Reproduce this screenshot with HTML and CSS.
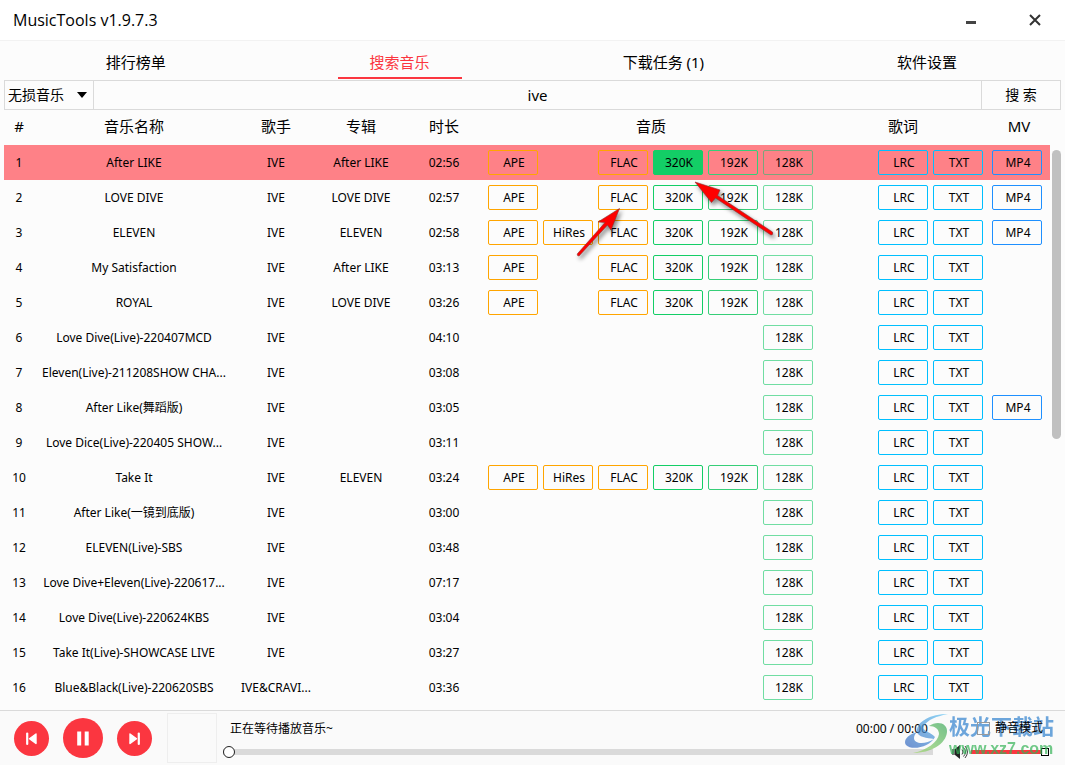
FILE: index.html
```html
<!DOCTYPE html>
<html lang="zh-CN">
<head>
<meta charset="utf-8">
<meta name="viewport" content="width=device-width, initial-scale=1">
<title>MusicTools v1.9.7.3</title>
<link rel="stylesheet" href="styles.css">
</head>
<body>
<header class="titlebar">
  <h1 class="app-title">MusicTools v1.9.7.3</h1>
  <div class="window-actions">
    <button class="window-btn" type="button" aria-label="最小化"><svg width="14" height="14" viewBox="0 0 14 14"><path d="M2 9.500h10" stroke="#444" stroke-width="3"/></svg></button>
    <button class="window-btn" type="button" aria-label="关闭"><svg width="14" height="14" viewBox="0 0 14 14"><path d="M2 2l10 10M12 2L2 12" stroke="#333" stroke-width="2"/></svg></button>
  </div>
</header>

<nav class="tabs">
  <a class="tab" href="#rank">排行榜单</a>
  <a class="tab active" href="#search" aria-current="page">搜索音乐</a>
  <a class="tab" href="#tasks">下载任务 (1)</a>
  <a class="tab" href="#settings">软件设置</a>
</nav>

<form class="search">
  <select class="source" aria-label="音乐来源"><option>无损音乐</option></select>
  <input class="keyword" type="text" value="ive" aria-label="关键词">
  <button class="submit" type="button">搜 索</button>
</form>

<main class="results">
  <table class="songs">
    <colgroup><col class="c-no"><col class="c-name"><col class="c-artist"><col class="c-album"><col class="c-time"><col class="c-quality"><col class="c-lyrics"><col class="c-mv"></colgroup>
    <thead>
      <tr><th>#</th><th>音乐名称</th><th>歌手</th><th>专辑</th><th>时长</th><th>音质</th><th>歌词</th><th>MV</th></tr>
    </thead>
    <tbody>
      <tr class="selected"><td>1</td><td>After LIKE</td><td>IVE</td><td>After LIKE</td><td>02:56</td>
        <td><div class="quality"><button class="tag ape">APE</button><button class="tag flac">FLAC</button><button class="tag k320 on">320K</button><button class="tag k192">192K</button><button class="tag k128">128K</button></div></td>
        <td><div class="lyrics"><button class="tag">LRC</button><button class="tag">TXT</button></div></td><td><div class="mv"><button class="tag mp4">MP4</button></div></td></tr>
      <tr><td>2</td><td>LOVE DIVE</td><td>IVE</td><td>LOVE DIVE</td><td>02:57</td>
        <td><div class="quality"><button class="tag ape">APE</button><button class="tag flac">FLAC</button><button class="tag k320">320K</button><button class="tag k192">192K</button><button class="tag k128">128K</button></div></td>
        <td><div class="lyrics"><button class="tag">LRC</button><button class="tag">TXT</button></div></td><td><div class="mv"><button class="tag mp4">MP4</button></div></td></tr>
      <tr><td>3</td><td>ELEVEN</td><td>IVE</td><td>ELEVEN</td><td>02:58</td>
        <td><div class="quality"><button class="tag ape">APE</button><button class="tag hires">HiRes</button><button class="tag flac">FLAC</button><button class="tag k320">320K</button><button class="tag k192">192K</button><button class="tag k128">128K</button></div></td>
        <td><div class="lyrics"><button class="tag">LRC</button><button class="tag">TXT</button></div></td><td><div class="mv"><button class="tag mp4">MP4</button></div></td></tr>
      <tr><td>4</td><td>My Satisfaction</td><td>IVE</td><td>After LIKE</td><td>03:13</td>
        <td><div class="quality"><button class="tag ape">APE</button><button class="tag flac">FLAC</button><button class="tag k320">320K</button><button class="tag k192">192K</button><button class="tag k128">128K</button></div></td>
        <td><div class="lyrics"><button class="tag">LRC</button><button class="tag">TXT</button></div></td><td></td></tr>
      <tr><td>5</td><td>ROYAL</td><td>IVE</td><td>LOVE DIVE</td><td>03:26</td>
        <td><div class="quality"><button class="tag ape">APE</button><button class="tag flac">FLAC</button><button class="tag k320">320K</button><button class="tag k192">192K</button><button class="tag k128">128K</button></div></td>
        <td><div class="lyrics"><button class="tag">LRC</button><button class="tag">TXT</button></div></td><td></td></tr>
      <tr><td>6</td><td>Love Dive(Live)-220407MCD</td><td>IVE</td><td></td><td>04:10</td>
        <td><div class="quality"><button class="tag k128">128K</button></div></td>
        <td><div class="lyrics"><button class="tag">LRC</button><button class="tag">TXT</button></div></td><td></td></tr>
      <tr><td>7</td><td>Eleven(Live)-211208SHOW CHA...</td><td>IVE</td><td></td><td>03:08</td>
        <td><div class="quality"><button class="tag k128">128K</button></div></td>
        <td><div class="lyrics"><button class="tag">LRC</button><button class="tag">TXT</button></div></td><td></td></tr>
      <tr><td>8</td><td>After Like(舞蹈版)</td><td>IVE</td><td></td><td>03:05</td>
        <td><div class="quality"><button class="tag k128">128K</button></div></td>
        <td><div class="lyrics"><button class="tag">LRC</button><button class="tag">TXT</button></div></td><td><div class="mv"><button class="tag mp4">MP4</button></div></td></tr>
      <tr><td>9</td><td>Love Dice(Live)-220405 SHOW...</td><td>IVE</td><td></td><td>03:11</td>
        <td><div class="quality"><button class="tag k128">128K</button></div></td>
        <td><div class="lyrics"><button class="tag">LRC</button><button class="tag">TXT</button></div></td><td></td></tr>
      <tr><td>10</td><td>Take It</td><td>IVE</td><td>ELEVEN</td><td>03:24</td>
        <td><div class="quality"><button class="tag ape">APE</button><button class="tag hires">HiRes</button><button class="tag flac">FLAC</button><button class="tag k320">320K</button><button class="tag k192">192K</button><button class="tag k128">128K</button></div></td>
        <td><div class="lyrics"><button class="tag">LRC</button><button class="tag">TXT</button></div></td><td></td></tr>
      <tr><td>11</td><td>After Like(一镜到底版)</td><td>IVE</td><td></td><td>03:00</td>
        <td><div class="quality"><button class="tag k128">128K</button></div></td>
        <td><div class="lyrics"><button class="tag">LRC</button><button class="tag">TXT</button></div></td><td></td></tr>
      <tr><td>12</td><td>ELEVEN(Live)-SBS</td><td>IVE</td><td></td><td>03:48</td>
        <td><div class="quality"><button class="tag k128">128K</button></div></td>
        <td><div class="lyrics"><button class="tag">LRC</button><button class="tag">TXT</button></div></td><td></td></tr>
      <tr><td>13</td><td>Love Dive+Eleven(Live)-220617...</td><td>IVE</td><td></td><td>07:17</td>
        <td><div class="quality"><button class="tag k128">128K</button></div></td>
        <td><div class="lyrics"><button class="tag">LRC</button><button class="tag">TXT</button></div></td><td></td></tr>
      <tr><td>14</td><td>Love Dive(Live)-220624KBS</td><td>IVE</td><td></td><td>03:04</td>
        <td><div class="quality"><button class="tag k128">128K</button></div></td>
        <td><div class="lyrics"><button class="tag">LRC</button><button class="tag">TXT</button></div></td><td></td></tr>
      <tr><td>15</td><td>Take It(Live)-SHOWCASE LIVE</td><td>IVE</td><td></td><td>03:27</td>
        <td><div class="quality"><button class="tag k128">128K</button></div></td>
        <td><div class="lyrics"><button class="tag">LRC</button><button class="tag">TXT</button></div></td><td></td></tr>
      <tr><td>16</td><td>Blue&amp;Black(Live)-220620SBS</td><td>IVE&amp;CRAVI...</td><td></td><td>03:36</td>
        <td><div class="quality"><button class="tag k128">128K</button></div></td>
        <td><div class="lyrics"><button class="tag">LRC</button><button class="tag">TXT</button></div></td><td></td></tr>
    </tbody>
  </table>
  <div class="scrollbar"><div class="thumb"></div></div>
  <svg class="arrows" width="220" height="100" viewBox="0 0 220 100" aria-hidden="true">
    <g fill="#fe0000" stroke="#8a3030" stroke-width="0.6" stroke-linejoin="round">
      <path d="M49.500 38.500L41 60L37.500 55L9 86Q7 86 7.200 84L35 52.500L28 52Z"/>
      <path d="M125 12L150 20L147.500 25.500L202.500 62Q203.500 65 201 65L145.500 28L141.500 32.500Z"/>
    </g>
  </svg>
</main>

<footer class="player">
  <div class="controls">
    <button class="round" type="button" aria-label="上一首"><svg width="35" height="35" viewBox="0 0 35 35"><path d="M13.2 12.500v10.500" stroke="#fff" stroke-width="2.2" stroke-linecap="round"/><path d="M22 13v9.500L15.500 17.700z" fill="#fff" stroke="#fff" stroke-width="1.4" stroke-linejoin="round"/></svg></button>
    <button class="round big" type="button" aria-label="暂停"><svg width="40" height="40" viewBox="0 0 40 40"><path d="M16.2 13.500v14M23.700 13.500v14" stroke="#fff" stroke-width="4"/></svg></button>
    <button class="round" type="button" aria-label="下一首"><svg width="35" height="35" viewBox="0 0 35 35"><path d="M21.800 12.500v10.500" stroke="#fff" stroke-width="2.2" stroke-linecap="round"/><path d="M13 13v9.500L19.500 17.700z" fill="#fff" stroke="#fff" stroke-width="1.4" stroke-linejoin="round"/></svg></button>
  </div>
  <div class="cover"></div>
  <div class="now">
    <div class="now-line"><span>正在等待播放音乐~</span><span class="clock">00:00 / 00:00</span></div>
    <input class="seek" type="range" min="0" max="100" value="0" aria-label="播放进度">
  </div>
  <div class="sound">
    <label class="mute"><input class="mute-box" type="checkbox">静音模式</label>
    <div class="volume">
      <svg width="17" height="14" viewBox="0 0 17 14"><path d="M1 4h3v6H1z" fill="#777"/><path d="M4 4l5-4v14l-5-4z" fill="#222"/><path d="M11 4.500q2 2.500 0 5M12.500 2.500q4 4.500 0 9M14 1q5 6 0 12" fill="none" stroke="#444"/></svg>
      <input class="level" type="range" min="0" max="100" value="100" aria-label="音量">
    </div>
  </div>
  <div class="watermark" aria-hidden="true">
    <svg width="44" height="40" viewBox="0 0 44 40">
      <defs>
        <linearGradient id="wmBlue" x1="0" y1="1" x2="1" y2="0"><stop offset="0" stop-color="#3465be"/><stop offset="1" stop-color="#62c6f4"/></linearGradient>
        <linearGradient id="wmGreen" x1="0" y1="1" x2="1" y2="0"><stop offset="0" stop-color="#a4d96c"/><stop offset="1" stop-color="#3ba85c"/></linearGradient>
      </defs>
      <path d="M43 0C25 0 11 8 12 18c1 5 10 6 17 7-9 6-20 5-20-1 0-2 1-4 3-6C2 21-2 27 1 31c6 6 24 2 29-8C26 18 16 17 19 12 22 6 32 2 43 0Z" fill="url(#wmBlue)"/>
      <path d="M24 12c8-6 19-3 18 6-1 12-16 21-34 21 14-3 25-11 26-19 0-5-4-8-10-8Z" fill="url(#wmGreen)"/>
    </svg>
    <div class="wm-text"><span class="wm-name">极光下载站</span><span class="wm-url">www.xz7.com</span></div>
  </div>
</footer>
</body>
</html>
```
FILE: styles.css
```css
* {
  box-sizing: border-box;
}

body {
  margin: 0;
  min-height: 100vh;
  display: flex;
  flex-direction: column;
  background: #fcfcfc;
  color: #000;
  font: 12px/18px "Noto Sans", "Noto Sans CJK SC", sans-serif;
}

button,
input,
select {
  font: inherit;
  color: inherit;
  margin: 0;
}

button {
  padding: 0;
  border: 0;
  background: none;
}

svg {
  display: block;
}

.titlebar {
  height: 41px;
  display: flex;
  justify-content: space-between;
  align-items: center;
  padding: 0 12px 0 13px;
  background: #fff;
  border-bottom: 1px solid #f2f2f2;
}

.app-title {
  margin: 0;
  font-size: 16px;
  line-height: 24px;
  font-weight: 400;
  font-family: "Open Sans", sans-serif;
}

.window-actions {
  display: flex;
  gap: 28px;
}

.window-btn {
  width: 36px;
  height: 36px;
  display: grid;
  place-items: center;
}

.tabs {
  display: grid;
  grid-template-columns: repeat(4, 1fr);
  justify-items: center;
  height: 39px;
  padding: 0 6px 0 4px;
}

.tab {
  width: 124px;
  height: 38px;
  padding-top: 9px;
  border-bottom: 2px solid transparent;
  color: #000;
  font-size: 15px;
  line-height: 24px;
  text-align: center;
  text-decoration: none;
}

.tab.active {
  color: #fb3640;
  border-color: #fb3640;
}

.search {
  display: flex;
  height: 30px;
  margin: 0 4px;
  border: 1px solid #dadada;
}

.source {
  width: 89px;
  padding: 0 3px;
  border: 0;
  border-right: 1px solid #dadada;
  border-radius: 0;
  appearance: none;
  font-size: 14px;
  background: url("data:image/svg+xml,%3Csvg xmlns='http://www.w3.org/2000/svg' width='10' height='6'%3E%3Cpath d='M0 0h10L5 6z'/%3E%3C/svg%3E") right 6px center no-repeat;
}

.keyword {
  flex: 1;
  min-width: 0;
  border: 0;
  background: none;
  font-size: 15px;
  text-align: center;
}

.submit {
  width: 79px;
  border-left: 1px solid #dadada;
  font-size: 14px;
}

.results {
  position: relative;
  flex: 1;
  display: flex;
  gap: 2px;
  margin: 0 4px 5px;
}

.songs {
  flex: 1;
  min-width: 0;
  align-self: flex-start;
  table-layout: fixed;
  border-collapse: collapse;
  text-align: center;
}

.c-no { width: 30px; }
.c-name { width: 200px; }
.c-artist { width: 84px; }
.c-album { width: 86px; }
.c-time { width: 80px; }
.c-quality { width: 334px; }
.c-lyrics { width: 170px; }
.c-mv { width: 62px; }

th,
td {
  height: 35px;
  padding: 0;
  white-space: nowrap;
}

th {
  padding-bottom: 4px;
  font-size: 15px;
  font-weight: 400;
}

.selected {
  background: #fe8187;
}

.quality {
  display: grid;
  grid-template-columns: repeat(6, 50px);
  gap: 5px;
  padding-left: 4px;
}

.lyrics {
  display: flex;
  justify-content: flex-end;
  gap: 5px;
  padding-right: 5px;
}

.mv {
  display: flex;
  padding-left: 4px;
}

.tag {
  width: 50px;
  height: 25px;
  padding-left: 2px;
  border: 1px solid #00bfff;
  border-radius: 2px;
}

.ape { grid-column: 1; border-color: #ffa500; }
.hires { grid-column: 2; border-color: #ffa500; }
.flac { grid-column: 3; border-color: #ffa500; }
.k320 { grid-column: 4; border-color: #13ce66; }
.k192 { grid-column: 5; border-color: #36ce78; }
.k128 { grid-column: 6; border-color: #70dda2; }
.mp4 { border-color: #1e90ff; }

.selected .k128 {
  border-color: #7ba57b;
}

.on {
  background: #13ce66;
}

.scrollbar {
  width: 9px;
  padding-top: 40px;
}

.thumb {
  height: 52%;
  border-radius: 5px;
  background: #c0c0c0;
}

.arrows {
  position: absolute;
  left: 566px;
  top: 60px;
  filter: drop-shadow(2px 3px 2px #00000077);
  pointer-events: none;
}

.player {
  position: relative;
  display: flex;
  align-items: center;
  height: 55px;
  padding: 0 16px 0 14px;
  border-top: 1px solid #dadada;
  background: #fafafa;
}

.controls {
  display: flex;
  align-items: center;
  gap: 14px;
}

.round {
  width: 35px;
  height: 35px;
  border-radius: 50%;
  background: #fb3640;
}

.big {
  width: 40px;
  height: 40px;
}

.cover {
  width: 50px;
  height: 50px;
  margin-left: 15px;
  border: 1px solid #eee;
}

.now,
.sound {
  padding-top: 2px;
}

.now {
  flex: 1;
  margin-left: 6px;
}

.now-line {
  display: flex;
  justify-content: space-between;
  padding: 0 5px 0 7px;
}

.seek,
.level {
  display: block;
  width: 100%;
  height: 12px;
  appearance: none;
  background: none;
}

.seek {
  margin-top: 8px;
}

.seek::-webkit-slider-runnable-track {
  height: 6px;
  background: #dadada;
}

.seek::-webkit-slider-thumb {
  appearance: none;
  width: 12px;
  height: 12px;
  margin-top: -3px;
  border: 1px solid #222;
  border-radius: 50%;
  background: #fff;
}

.sound {
  width: 98px;
  margin-left: 18px;
}

.mute {
  position: relative;
  z-index: 1;
  display: flex;
  align-items: center;
  gap: 5px;
  padding-left: 26px;
}

.mute-box {
  appearance: none;
  width: 13px;
  height: 13px;
  border: 1px solid #999;
}

.volume {
  display: flex;
  align-items: center;
  gap: 3px;
  margin-top: 8px;
}

.volume svg {
  flex: none;
}

.level {
  min-width: 0;
}

.level::-webkit-slider-runnable-track {
  height: 4px;
  background: #fb3640;
}

.level::-webkit-slider-thumb {
  appearance: none;
  width: 8px;
  height: 8px;
  margin-top: -2px;
  border: 1px solid #000;
  background: #fff;
}

.watermark {
  position: absolute;
  right: 11px;
  top: 3px;
  display: flex;
  opacity: 0.7;
  pointer-events: none;
}

.wm-text {
  display: flex;
  flex-direction: column;
  font-weight: 700;
}

.wm-name {
  color: #3182ce;
  font-size: 21px;
  line-height: 24px;
}

.wm-url {
  color: #35b357;
  font: 700 16px/22px "Liberation Sans", sans-serif;
}
```
